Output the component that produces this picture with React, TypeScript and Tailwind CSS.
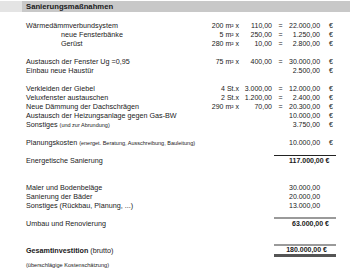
import type { ReactNode } from "react";

type Row = {
  label?: ReactNode;
  indent?: boolean;
  qty?: string;
  price?: string;
  total?: string;
  euro?: boolean;
  bold?: boolean;
  line?: "dark" | "gray";
};

const small = (t: string) => <span className="text-[5.5px]">{t}</span>;

const rows: Row[] = [
  { label: "Wärmedämmverbundsystem", qty: "200 m² x", price: "110,00", total: "22.000,00", euro: true },
  { label: "neue Fensterbänke", indent: true, qty: "5 m² x", price: "250,00", total: "1.250,00", euro: true },
  { label: "Gerüst", indent: true, qty: "280 m² x", price: "10,00", total: "2.800,00", euro: true },
  {},
  { label: "Austausch der Fenster Ug =0,95", qty: "75 m² x", price: "400,00", total: "30.000,00", euro: true },
  { label: "Einbau neue Haustür", total: "2.500,00", euro: true },
  {},
  { label: "Verkleiden der Giebel", qty: "4 St.x", price: "3.000,00", total: "12.000,00", euro: true },
  { label: "Veluxfenster austauschen", qty: "2 St.x", price: "1.200,00", total: "2.400,00", euro: true },
  { label: "Neue Dämmung der Dachschrägen", qty: "290 m² x", price: "70,00", total: "20.300,00", euro: true },
  { label: "Austausch der Heizungsanlage gegen Gas-BW", total: "10.000,00", euro: true },
  { label: <>Sonstiges {small("(und zur Abrundung)")}</>, total: "3.750,00", euro: true },
  {},
  { label: <>Planungskosten {small("(energet. Beratung, Ausschreibung, Bauleitung)")}</>, total: "10.000,00", euro: true },
  { line: "dark" },
  { label: "Energetische Sanierung", total: "117.000,00 €", bold: true },
  {},
  {},
  { label: "Maler und Bodenbeläge", total: "30.000,00" },
  { label: "Sanierung der Bäder", total: "20.000,00" },
  { label: "Sonstiges (Rückbau, Planung, ...)", total: "13.000,00" },
  { line: "gray" },
  { label: "Umbau und Renovierung", total: "63.000,00 €", bold: true },
  {},
  { line: "gray" },
];

export default function App() {
  return (
    <div className="w-[350px] h-[268px] overflow-hidden bg-white text-[#1a1a1a] font-['Liberation_Sans',Arial,sans-serif] text-[7px] leading-[9px]">
      <div className="mt-[1px] h-[11px] bg-[#e4e4e4] pl-[22px]">
        <div className="h-full bg-[#c8c8c8] pl-[4px] font-bold text-[7.7px] leading-[11px]">
          Sanierungsmaßnahmen
        </div>
      </div>

      {/* Kostenaufstellung */}
      <div className="mt-[9px] pl-[26px] grid grid-cols-[179px_34px_33px_17px_31px_16px] auto-rows-[9px]">
        {rows.map((r, i) =>
          r.line ? (
            <div key={i} className="col-start-4 col-span-3 pl-[2px] flex items-end">
              <div
                className={`w-full ${
                  r.line === "dark" ? "h-[1px] bg-[#222]" : "h-[2px] bg-[#9a9a9a]"
                }`}
              />
            </div>
          ) : (
            <div key={i} className="contents">
              <div className={`whitespace-nowrap text-[7.2px] ${r.indent ? "pl-[35px]" : ""}`}>{r.label}</div>
              <div className="text-right whitespace-nowrap">{r.qty}</div>
              <div className="text-right whitespace-nowrap">{r.price}</div>
              <div className="text-center">{r.qty ? "=" : ""}</div>
              {r.bold ? (
                <div className="col-span-2 text-right whitespace-nowrap font-bold pr-[7px]">{r.total}</div>
              ) : (
                <>
                  <div className="text-right whitespace-nowrap">{r.total}</div>
                  <div className="pl-[9px]">{r.euro ? "€" : ""}</div>
                </>
              )}
            </div>
          )
        )}
        <div className="whitespace-nowrap text-[7.2px]">
          <span className="font-bold">Gesamtinvestition</span> (brutto)
        </div>
        <div className="col-start-4 col-span-3 pl-[2px]">
          <div className="border-b-[3px] border-[#555] flex justify-end pr-[9px] font-bold leading-[8px]">
            180.000,00 €
          </div>
        </div>
        <div className="col-span-6 pt-[6px] text-[5.6px] leading-[9px] whitespace-nowrap">
          (überschlägige Kostenschätzung)
        </div>
      </div>
    </div>
  );
}
